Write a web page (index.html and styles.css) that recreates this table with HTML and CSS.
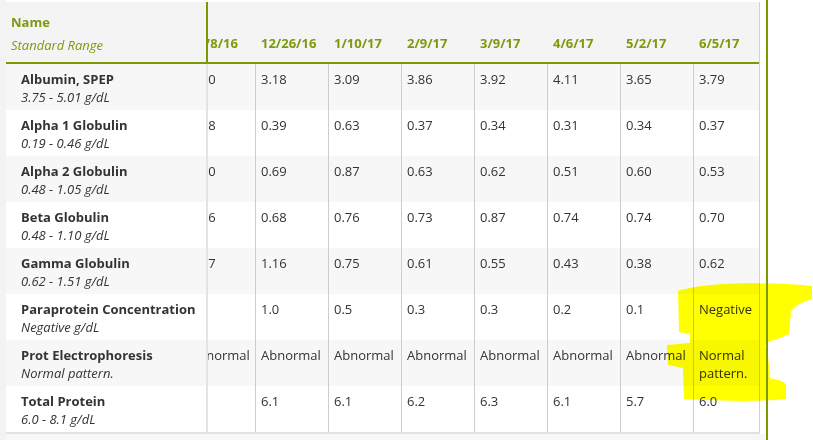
FILE: index.html
```html
<!DOCTYPE html>
<html>
<head>
<meta charset="utf-8">
<link rel="stylesheet" href="styles.css">
</head>
<body>
<div class="panel">
  <div class="table">
    <div class="row head">
      <div class="label">
        <div class="name">Name</div>
        <div class="range">Standard Range</div>
      </div>
      <div class="viewport">
        <div class="track">
          <div class="cell">11/8/16</div>
          <div class="cell">12/26/16</div>
          <div class="cell">1/10/17</div>
          <div class="cell">2/9/17</div>
          <div class="cell">3/9/17</div>
          <div class="cell">4/6/17</div>
          <div class="cell">5/2/17</div>
          <div class="cell">6/5/17</div>
        </div>
      </div>
    </div>

    <div class="row shade">
      <div class="label"><div class="name">Albumin, SPEP</div><div class="range">3.75 - 5.01 g/dL</div></div>
      <div class="viewport"><div class="track">
        <div class="cell">3.40</div><div class="cell">3.18</div><div class="cell">3.09</div><div class="cell">3.86</div><div class="cell">3.92</div><div class="cell">4.11</div><div class="cell">3.65</div><div class="cell">3.79</div>
      </div></div>
    </div>

    <div class="row">
      <div class="label"><div class="name">Alpha 1 Globulin</div><div class="range">0.19 - 0.46 g/dL</div></div>
      <div class="viewport"><div class="track">
        <div class="cell">0.38</div><div class="cell">0.39</div><div class="cell">0.63</div><div class="cell">0.37</div><div class="cell">0.34</div><div class="cell">0.31</div><div class="cell">0.34</div><div class="cell">0.37</div>
      </div></div>
    </div>

    <div class="row shade">
      <div class="label"><div class="name">Alpha 2 Globulin</div><div class="range">0.48 - 1.05 g/dL</div></div>
      <div class="viewport"><div class="track">
        <div class="cell">0.70</div><div class="cell">0.69</div><div class="cell">0.87</div><div class="cell">0.63</div><div class="cell">0.62</div><div class="cell">0.51</div><div class="cell">0.60</div><div class="cell">0.53</div>
      </div></div>
    </div>

    <div class="row">
      <div class="label"><div class="name">Beta Globulin</div><div class="range">0.48 - 1.10 g/dL</div></div>
      <div class="viewport"><div class="track">
        <div class="cell">0.76</div><div class="cell">0.68</div><div class="cell">0.76</div><div class="cell">0.73</div><div class="cell">0.87</div><div class="cell">0.74</div><div class="cell">0.74</div><div class="cell">0.70</div>
      </div></div>
    </div>

    <div class="row shade">
      <div class="label"><div class="name">Gamma Globulin</div><div class="range">0.62 - 1.51 g/dL</div></div>
      <div class="viewport"><div class="track">
        <div class="cell">1.17</div><div class="cell">1.16</div><div class="cell">0.75</div><div class="cell">0.61</div><div class="cell">0.55</div><div class="cell">0.43</div><div class="cell">0.38</div><div class="cell">0.62</div>
      </div></div>
    </div>

    <div class="row">
      <div class="label"><div class="name">Paraprotein Concentration</div><div class="range">Negative g/dL</div></div>
      <div class="viewport"><div class="track">
        <div class="cell"></div><div class="cell">1.0</div><div class="cell">0.5</div><div class="cell">0.3</div><div class="cell">0.3</div><div class="cell">0.2</div><div class="cell">0.1</div><div class="cell">Negative</div>
      </div></div>
    </div>

    <div class="row shade">
      <div class="label"><div class="name">Prot Electrophoresis</div><div class="range">Normal pattern.</div></div>
      <div class="viewport"><div class="track">
        <div class="cell">Abnormal</div><div class="cell">Abnormal</div><div class="cell">Abnormal</div><div class="cell">Abnormal</div><div class="cell">Abnormal</div><div class="cell">Abnormal</div><div class="cell">Abnormal</div><div class="cell">Normal pattern.</div>
      </div></div>
    </div>

    <div class="row">
      <div class="label"><div class="name">Total Protein</div><div class="range">6.0 - 8.1 g/dL</div></div>
      <div class="viewport"><div class="track">
        <div class="cell"></div><div class="cell">6.1</div><div class="cell">6.1</div><div class="cell">6.2</div><div class="cell">6.3</div><div class="cell">6.1</div><div class="cell">5.7</div><div class="cell">6.0</div>
      </div></div>
    </div>
  </div>
  <div class="foot"></div>
</div>

<svg class="highlight" width="813" height="440" viewBox="0 0 813 440" xmlns="http://www.w3.org/2000/svg">
  <path fill="#ffff00" d="M678,291 C700,283 760,281 812,286 L812,299 C802,302 794,306 791,312 L789,334 C781,338 774,340 768,342 L765,346 L768,356 L770,378 C778,380 786,381 786,386 L786,399 C760,402 720,401 684,399 L683,368 L668,365 L667,345 L690,343 L690,334 L679,332 Z"/>
</svg>
</body>
</html>
```

FILE: styles.css
```css
* { box-sizing: border-box; }

html, body {
  margin: 0;
  padding: 0;
  background: #ffffff;
}

body {
  width: 813px;
  height: 440px;
  overflow: hidden;
  font-family: "Open Sans", "Noto Sans", sans-serif;
  font-size: 13px;
  color: #333338;
}

.panel {
  width: 768px;
  height: 440px;
  border-left: 6px solid #f3f3f3;
  border-right: 2px solid #7a9a01;
  padding-top: 2px;
  padding-right: 6px;
  display: flex;
  flex-direction: column;
}

.table {
  border-right: 1px solid #d2d2d2;
  border-bottom: 2px solid #e2e2e2;
}

.row {
  display: flex;
  height: 46px;
  background: #ffffff;
}

.row.shade { background: #f7f7f7; }

.row.head {
  height: 62px;
  background: #f4f4f4;
  border-bottom: 2px solid #7a9a01;
}

.label {
  width: 202px;
  flex: none;
  border-right: 2px solid #e4e4e4;
  padding: 6px 0 0 15px;
  line-height: 18px;
}

.head .label {
  border-right-color: #7a9a01;
  padding: 9px 0 0 5px;
  line-height: 23px;
}

.name { font-weight: 700; }
.range { font-style: italic; }

.head .name,
.head .range { color: #7c9a0c; }

.viewport {
  flex: 1;
  overflow: hidden;
  display: flex;
}

.track {
  display: flex;
  margin-left: -24px;
  flex: none;
}

.cell {
  width: 73px;
  flex: none;
  border-left: 1px solid #cdcdcd;
  padding: 6px 4px 0 5px;
  line-height: 18px;
  white-space: normal;
}

.cell:first-child { width: 71px; }

.head .cell {
  border-left: 1px solid transparent;
  color: #7c9a0c;
  font-weight: 700;
  align-self: flex-end;
  padding-bottom: 8px;
  line-height: 21px;
  white-space: nowrap;
}

.foot {
  flex: 1;
  background: #f7f7f7;
  margin-right: -6px;
}

.highlight {
  position: absolute;
  left: 0;
  top: 0;
  pointer-events: none;
  mix-blend-mode: multiply;
}
```
